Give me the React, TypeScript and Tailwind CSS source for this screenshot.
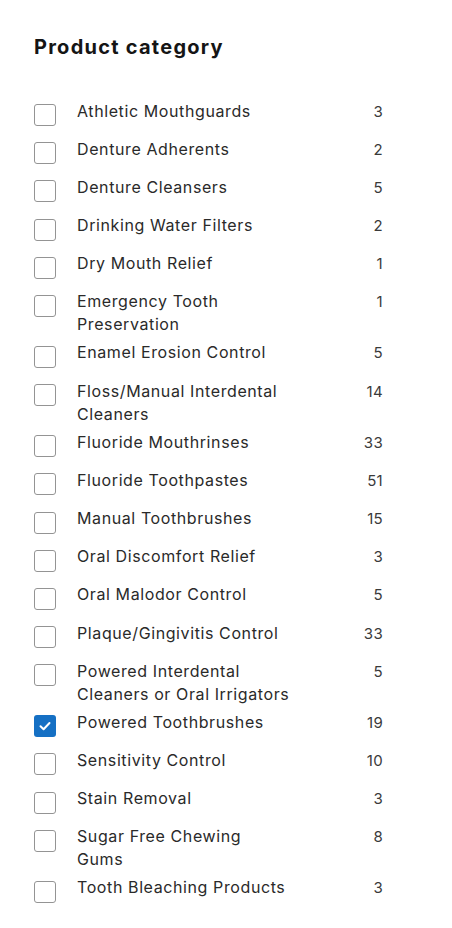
import React from "react";

type Item = { lines: string[]; count: number; checked?: boolean };

const items: Item[] = [
  { lines: ["Athletic Mouthguards"], count: 3 },
  { lines: ["Denture Adherents"], count: 2 },
  { lines: ["Denture Cleansers"], count: 5 },
  { lines: ["Drinking Water Filters"], count: 2 },
  { lines: ["Dry Mouth Relief"], count: 1 },
  { lines: ["Emergency Tooth", "Preservation"], count: 1 },
  { lines: ["Enamel Erosion Control"], count: 5 },
  { lines: ["Floss/Manual Interdental", "Cleaners"], count: 14 },
  { lines: ["Fluoride Mouthrinses"], count: 33 },
  { lines: ["Fluoride Toothpastes"], count: 51 },
  { lines: ["Manual Toothbrushes"], count: 15 },
  { lines: ["Oral Discomfort Relief"], count: 3 },
  { lines: ["Oral Malodor Control"], count: 5 },
  { lines: ["Plaque/Gingivitis Control"], count: 33 },
  { lines: ["Powered Interdental", "Cleaners or Oral Irrigators"], count: 5 },
  { lines: ["Powered Toothbrushes"], count: 19, checked: true },
  { lines: ["Sensitivity Control"], count: 10 },
  { lines: ["Stain Removal"], count: 3 },
  { lines: ["Sugar Free Chewing", "Gums"], count: 8 },
  { lines: ["Tooth Bleaching Products"], count: 3 },
];

function Box({ checked }: { checked?: boolean }) {
  return (
    <div className="h-[33.2px] w-[22px] shrink-0 pt-[4.5px]">
      {checked ? (
        <div className="flex h-[22px] w-[22px] items-center justify-center rounded-[3px] bg-[#1570c4]">
          <svg width="14" height="14" viewBox="0 0 14 14" fill="none">
            <path d="M2.5 7.2 L5.6 10.2 L11.5 4" stroke="white" strokeWidth="2" strokeLinecap="round" strokeLinejoin="round" />
          </svg>
        </div>
      ) : (
        <div className="h-[22px] w-[22px] rounded-[3px] border-[1.5px] border-[#949494] bg-white" />
      )}
    </div>
  );
}

export default function App() {
  return (
    <div
      className="min-h-[928px] w-[452px] bg-white pl-[34px] pt-[33px]"
      style={{ fontFamily: "Inter, 'Open Sans', sans-serif" }}
    >
      <h2 className="h-[28px] text-[20px] font-bold leading-[28px] tracking-[1.25px] text-[#151515]">
        Product category
      </h2>
      <ul className="mt-[38.5px] flex w-[349px] flex-col gap-[5px]">
        {items.map((it, i) => (
          <li key={i} className="flex items-start">
            <Box checked={it.checked} />
            <div className="ml-[21px] flex-1 text-[16px] leading-[23px] tracking-[0.6px] text-[#2a2a2a]">
              {it.lines.map((l, j) => (
                <div key={j} className="whitespace-nowrap">
                  {l}
                </div>
              ))}
            </div>
            <div className="w-[40px] text-right text-[15px] leading-[23px] tracking-[0.3px] text-[#3a3a3a]">
              {it.count}
            </div>
          </li>
        ))}
      </ul>
    </div>
  );
}
